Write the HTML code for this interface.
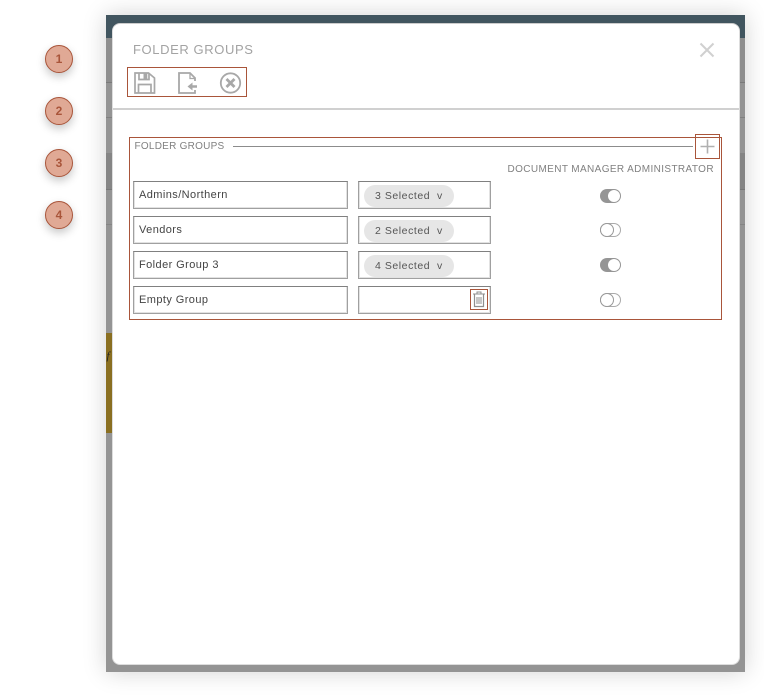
<!DOCTYPE html>
<html><head><meta charset="utf-8"><style>
html,body{margin:0;padding:0;background:#fff}
body{width:764px;height:695px;position:relative;overflow:hidden;font-family:"Liberation Sans",sans-serif}
div{position:absolute;box-sizing:border-box}
.c{width:28px;height:28px;left:45px;border-radius:50%;background:#e0a995;border:1px solid #a9553a;color:#a9553a;font-size:12px;font-weight:bold;line-height:26px;text-align:center;box-shadow:0 4px 9px rgba(0,0,0,.22)}
.in{background:#fff;border:1px solid #a0a0a0;border-top-color:#808080;box-shadow:inset 1px 0 #e2e2e2,inset -1px 0 #e2e2e2,inset 0 -1px #e2e2e2;height:28.4px}
.t{font-size:11px;color:#444;line-height:27px;padding-left:5px;letter-spacing:.42px}
.p{left:364px;width:90px;height:22px;border-radius:11px;background:#e6e6e6;color:#555;font-size:10.5px;line-height:22px;padding-left:11px;letter-spacing:.55px;white-space:pre}
.lab{font-size:10px;color:#808080;letter-spacing:.25px;white-space:nowrap}
.s{left:600px;width:21px;height:14px;border-radius:7px}
.on{background:#959595}
.on i{position:absolute;right:1px;top:1px;width:12px;height:12px;border-radius:50%;background:#fff}
.off{background:#fff;border:1px solid #aaa}
.off i{position:absolute;left:-1px;top:-1px;width:14px;height:14px;border-radius:50%;background:#fff;border:1px solid #999;box-sizing:border-box}
</style></head><body>
<div class="c" style="top:45px">1</div>
<div class="c" style="top:97px">2</div>
<div class="c" style="top:149px">3</div>
<div class="c" style="top:201px">4</div>

<div style="left:106px;top:15px;width:639px;height:657px;background:#949494;box-shadow:0 0 22px rgba(0,0,0,.18);overflow:hidden"></div>
<div style="left:106px;top:15px;width:639px;height:23px;background:#41555f"></div>
<div style="left:106px;top:38px;width:639px;height:44px;background:#8e8e8e"></div>
<div style="left:106px;top:82px;width:639px;height:1px;background:#7a7a7a"></div>
<div style="left:106px;top:117px;width:639px;height:1px;background:#808080"></div>
<div style="left:106px;top:153px;width:639px;height:36px;background:#858585"></div>
<div style="left:106px;top:189px;width:639px;height:1px;background:#777"></div>
<div style="left:106px;top:224px;width:639px;height:1px;background:#858585"></div>
<div style="left:106px;top:333px;width:20px;height:100px;background:#8a6f21"></div>
<div style="left:106.5px;top:350px;font:italic 11px 'Liberation Serif',serif;color:#222">f</div>

<div style="left:112px;top:23px;width:628px;height:642px;background:#fff;border-radius:8px;border:1px solid #ddd;border-top-color:#ccc"></div>

<div style="left:133px;top:42px;font-size:13px;color:#a3a3a3;letter-spacing:.6px;white-space:nowrap">FOLDER GROUPS</div>
<svg style="position:absolute;left:699px;top:42px" width="16" height="16"><path d="M1.5 1.5L14.5 14.5M14.5 1.5L1.5 14.5" stroke="#d0d0d0" stroke-width="2" fill="none"/></svg>

<div style="left:127px;top:67px;width:120px;height:30px;border:1px solid #a9553a"></div>
<svg style="position:absolute;left:130px;top:69px" width="112" height="26" fill="none" stroke="#a8a8a8">
<path d="M5 4H18.5L24.500 9V24H5Z" stroke-width="1.700"/>
<path d="M9 4.500V10.500H19V4.500" stroke-width="1.700"/>
<rect x="13.500" y="4.500" width="3.800" height="5.500" fill="#a8a8a8" stroke="none"/>
<path d="M8.500 24V15.500H21V24" stroke-width="1.700"/>
<path d="M65 12V9L60 4H49V24H65V21" stroke-width="1.800"/>
<path d="M60 4V9.500H65" stroke-width="1.300"/>
<path d="M67 17.500H60" stroke-width="2.500"/>
<path d="M62.500 13.500L57.500 17.500L62.500 21.500Z" fill="#a8a8a8" stroke="none"/>
<circle cx="100.500" cy="14" r="9.700" stroke-width="1.800"/>
<path d="M96.500 10L104.500 18M104.500 10L96.500 18" stroke-width="2.800"/>
</svg>

<div style="left:113px;top:108px;width:626px;height:2px;background:#d0d0d0"></div>

<div style="left:129px;top:137px;width:593px;height:183px;border:1px solid #a9553a"></div>
<div class="lab" style="left:134.500px;top:141px">FOLDER GROUPS</div>
<div style="left:233px;top:146px;width:460px;height:1px;background:#8c8c8c"></div>
<div style="left:695px;top:134px;width:25px;height:25px;border:1px solid #a9553a"></div>
<svg style="position:absolute;left:699px;top:138px" width="17" height="17"><path d="M8.500 1.500V15.500M1.500 8.500H15.500" stroke="#b0b0b0" stroke-width="1.600"/></svg>
<div class="lab" style="left:507.500px;top:163.500px;letter-spacing:.38px">DOCUMENT MANAGER ADMINISTRATOR</div>

<div class="in t" style="left:133px;top:181px;width:215px">Admins/Northern</div>
<div class="in t" style="left:133px;top:216px;width:215px">Vendors</div>
<div class="in t" style="left:133px;top:251px;width:215px">Folder Group 3</div>
<div class="in t" style="left:133px;top:286px;width:215px">Empty Group</div>

<div class="in" style="left:358px;top:181px;width:133px"></div>
<div class="in" style="left:358px;top:216px;width:133px"></div>
<div class="in" style="left:358px;top:251px;width:133px"></div>
<div class="in" style="left:358px;top:286px;width:133px"></div>

<div class="p" style="top:185px">3 Selected  v</div>
<div class="p" style="top:220px">2 Selected  v</div>
<div class="p" style="top:255px">4 Selected  v</div>

<div style="left:470px;top:289px;width:18px;height:21px;border:1px solid #a9553a"></div>
<svg style="position:absolute;left:472px;top:291px" width="14" height="17" fill="none" stroke="#8f8f8f">
<path d="M1 3H13M5 3V1H9V3" stroke-width="1"/>
<path d="M2.500 3.500V15.500H11.500V3.500" stroke-width="1.200"/>
<path d="M5 6V13M7 6V13M9 6V13" stroke-width="1"/>
</svg>

<div class="s on" style="top:189px"><i></i></div>
<div class="s off" style="top:223px"><i></i></div>
<div class="s on" style="top:258px"><i></i></div>
<div class="s off" style="top:293px"><i></i></div>
</body></html>
